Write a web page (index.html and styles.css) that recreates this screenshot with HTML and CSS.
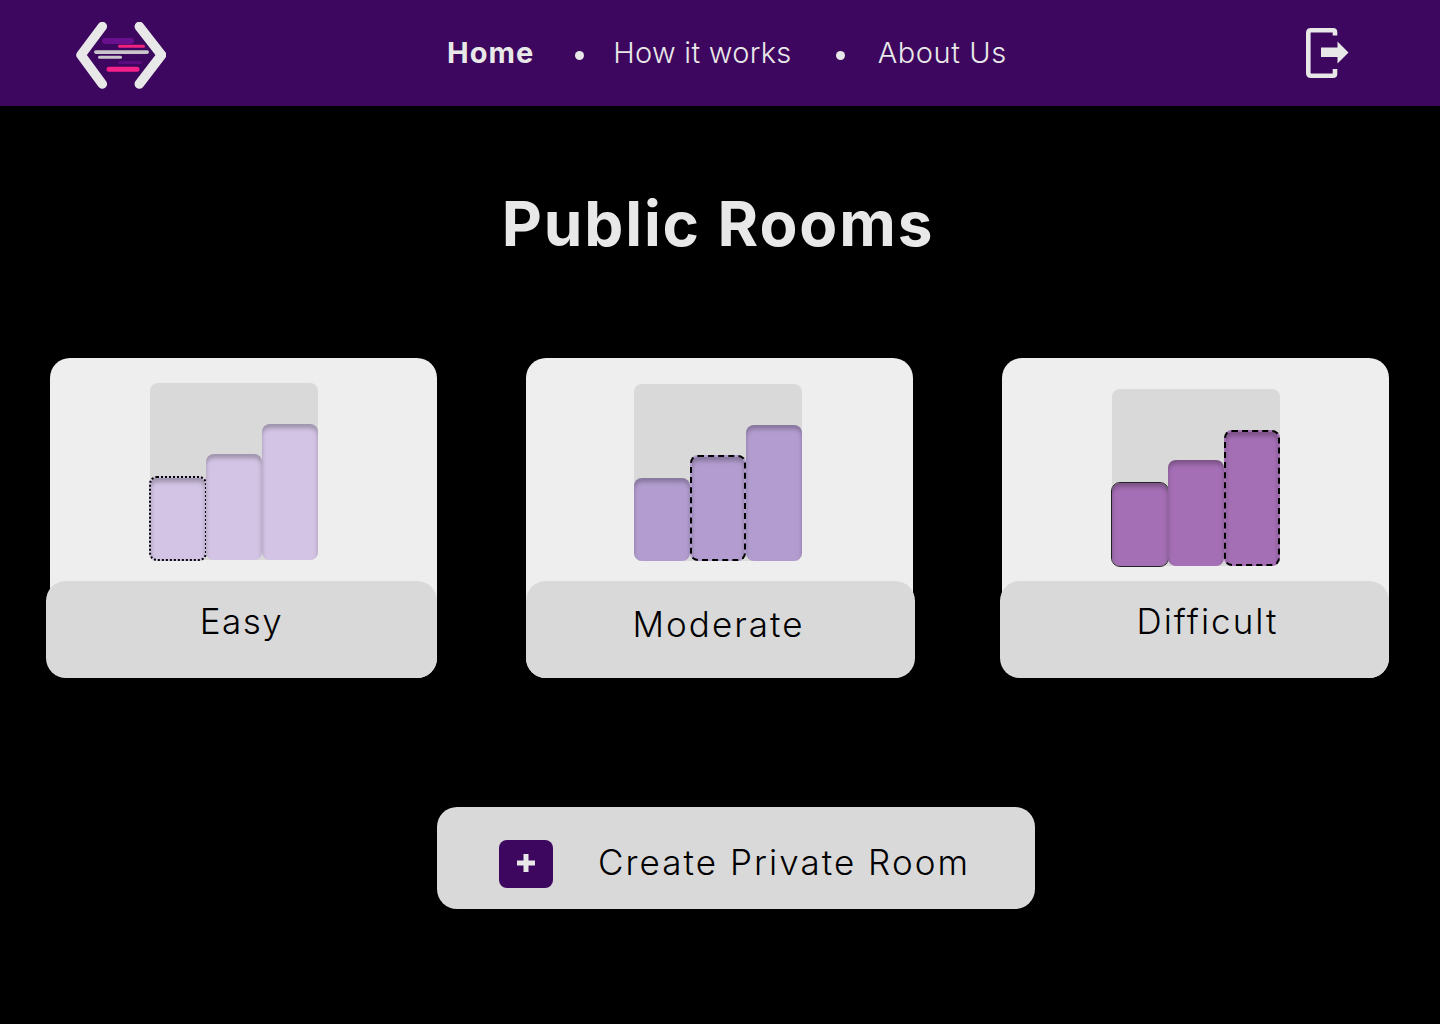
FILE: index.html
```html
<!DOCTYPE html>
<html lang="en">
<head>
    <meta charset="UTF-8">
    <meta name="viewport" content="width=device-width, initial-scale=1.0">
    <title>Public Rooms</title>
    <link rel="stylesheet" href="styles.css">
</head>
<body>
    <nav class="topbar">
        <svg class="logo" width="90" height="68" viewBox="0 0 90 68" aria-label="Logo">
            <rect x="26" y="16" width="32" height="6" rx="3" fill="#6a0f8e"/>
            <rect x="42" y="22.700" width="27" height="3" rx="1.500" fill="#f0237f"/>
            <rect x="18" y="28.300" width="55" height="3.600" rx="1.800" fill="#c9c5ca"/>
            <rect x="22" y="33.700" width="24" height="3" rx="1.500" fill="#c9c5ca"/>
            <rect x="42" y="39" width="24" height="3" rx="1.500" fill="#5a0c7e"/>
            <rect x="30.500" y="44.700" width="33" height="5" rx="2.500" fill="#f5218b"/>
            <path d="M26.300 4.500 5 33 26.300 62M63.300 4.500 85.500 33 63.300 62" fill="none" stroke="#e8e8e8" stroke-width="9.500" stroke-linecap="round" stroke-linejoin="round"/>
        </svg>
        <div class="nav-links">
            <a class="nav-link active">Home</a>
            <span class="nav-dot"></span>
            <a class="nav-link works">How it works</a>
            <span class="nav-dot second"></span>
            <a class="nav-link about">About Us</a>
        </div>
        <svg class="logout" width="44" height="50" viewBox="0 0 44 50" aria-label="Log out">
            <path d="M29 7.500V4.300Q29 2.300 27 2.300H5Q2.300 2.300 2.300 5V45Q2.300 47.700 5 47.700H27Q29 47.700 29 45.700V41" fill="none" stroke="#e8e8e8" stroke-width="4.600"/>
            <path d="M15 19.500H31.500V13.500L42.500 24.500 31.500 35.500V29H15Z" fill="#e8e8e8"/>
        </svg>
    </nav>

    <main>
        <h1>Public Rooms</h1>

        <section class="rooms">
            <div class="room room-easy">
                <div class="chart">
                    <div class="bar low selected-dotted"></div>
                    <div class="bar mid"></div>
                    <div class="bar high"></div>
                </div>
                <div class="room-label">Easy</div>
            </div>
            <div class="room room-moderate">
                <div class="chart">
                    <div class="bar low"></div>
                    <div class="bar mid selected-dashed"></div>
                    <div class="bar high"></div>
                </div>
                <div class="room-label">Moderate</div>
            </div>
            <div class="room room-difficult">
                <div class="chart">
                    <div class="bar low selected-solid"></div>
                    <div class="bar mid"></div>
                    <div class="bar high selected-dashed"></div>
                </div>
                <div class="room-label">Difficult</div>
            </div>
        </section>

        <button class="create-btn">
            <span class="plus-box">
                <svg width="18" height="18" viewBox="0 0 18 18"><path d="M6.500 0h5v6.500H18v5h-6.500V18h-5v-6.500H0v-5h6.500Z" fill="#e8e8e8"/></svg>
            </span>
            <span class="create-text">Create Private Room</span>
        </button>
    </main>
</body>
</html>
```

FILE: styles.css
```css
* {
    box-sizing: border-box;
}

body {
    margin: 0;
    height: 1024px;
    overflow: hidden;
    background: #000;
    font-family: 'Inter', 'Open Sans', sans-serif;
}

.topbar {
    height: 106px;
    background: #3d065f;
    display: flex;
    align-items: flex-start;
    padding-left: 76px;
}

.logo {
    margin-top: 22px;
}

.nav-links {
    display: flex;
    align-items: center;
    height: 106px;
    margin-left: 281px;
    padding-bottom: 2px;
}

.nav-link {
    font-size: 29px;
    font-weight: 300;
    color: #e8e8e8;
    white-space: nowrap;
}

.nav-link.active {
    font-weight: 700;
    letter-spacing: 1px;
}

.nav-link.works {
    letter-spacing: 0.3px;
}

.nav-link.about {
    letter-spacing: 0.6px;
}

.nav-dot {
    width: 9px;
    height: 9px;
    border-radius: 50%;
    background: #e8e8e8;
    margin: 6px 29px 0 41px;
}

.nav-dot.second {
    margin: 6px 33px 0 44px;
}

.logout {
    margin: 28px 0 0 299px;
}

main {
    display: flex;
    flex-direction: column;
}

h1 {
    margin: 84px 0 0;
    padding-right: 4px;
    text-align: center;
    font-size: 62px;
    line-height: 68px;
    font-weight: 700;
    letter-spacing: 1.9px;
    color: #e8e8e8;
}

.rooms {
    display: flex;
    gap: 89px;
    margin: 100px 0 0 50px;
}

.room {
    width: 387px;
    height: 320px;
    background: #eeeeee;
    border-radius: 20px;
    display: flex;
    flex-direction: column;
}

.chart {
    width: 168px;
    height: 177px;
    background: #d9d9d9;
    border-radius: 8px;
    display: flex;
    align-items: flex-end;
}

.room-easy .chart {
    margin: 25px 0 0 100px;
}

.room-moderate .chart {
    margin: 26px 0 0 108px;
}

.room-difficult .chart {
    margin: 31px 0 0 110px;
}

.bar {
    width: 56px;
    border-radius: 8px;
    box-shadow: inset 0 4px 4px rgba(0, 0, 0, 0.25);
}

.low { height: 83px; }
.mid { height: 106px; }
.high { height: 136px; }

.room-easy .bar { background: #d3c4e5; }
.room-moderate .bar { background: #b39dd0; }
.room-difficult .bar { background: #a56fb5; }

.selected-dotted {
    width: 58px;
    height: 85px;
    margin: 0 -1px -1px;
    border: 2px dotted #000;
}

.selected-dashed { border: 2px dashed #000; }

.selected-solid { outline: 1px solid #222; }

.room-label {
    position: relative; /* sits over the card edge */
    margin-top: auto;
    height: 97px;
    background: #d9d9d9;
    border-radius: 20px;
    display: flex;
    justify-content: center;
    color: #000;
    font-size: 35px;
    font-weight: 300;
    letter-spacing: 2px;
    line-height: 42px;
    padding-top: 19px;
}

.room-easy .room-label {
    margin-left: -4px;
    letter-spacing: 1.5px;
}

.room-moderate .room-label {
    margin-right: -2px;
    padding: 22px 4px 0 0;
}

.room-difficult .room-label {
    margin-left: -2px;
    padding-left: 26px;
}

.create-btn {
    display: flex;
    align-items: center;
    width: 598px;
    height: 102px;
    margin: 129px 0 0 437px;
    padding: 0 0 0 62px;
    background: #d9d9d9;
    border: none;
    border-radius: 20px;
    font-family: inherit;
}

.plus-box {
    width: 54px;
    height: 48px;
    margin-top: 12px;
    background: #3d065f;
    border-radius: 8px;
    display: flex;
    align-items: center;
    justify-content: center;
    padding: 0 1px 2px 0;
}

.create-text {
    margin: 8px 0 0 45px;
    font-size: 35px;
    font-weight: 300;
    letter-spacing: 2.05px;
    color: #000;
    white-space: nowrap;
}
```
